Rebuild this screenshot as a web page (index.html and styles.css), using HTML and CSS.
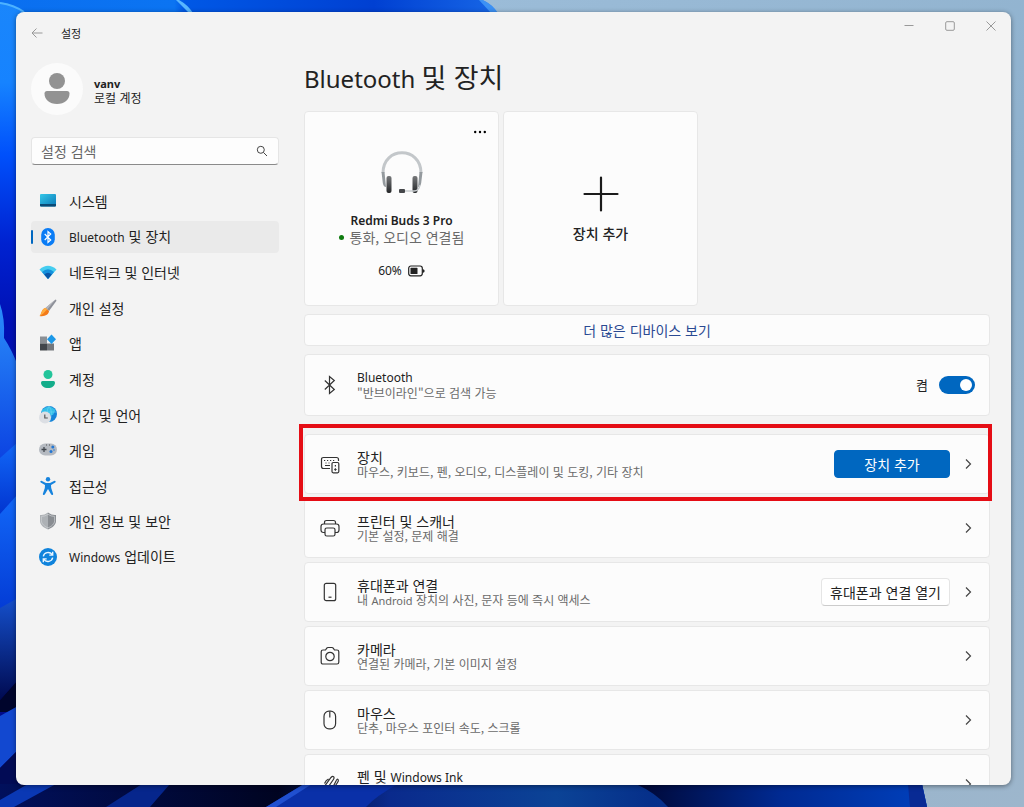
FILE: index.html
```html
<!DOCTYPE html>
<html lang="ko">
<head>
<meta charset="utf-8">
<meta name="viewport" content="width=device-width, initial-scale=1">
<title>설정</title>
<link rel="stylesheet" href="styles.css">
</head>
<body>
<svg class="wallpaper" viewBox="0 0 1024 807" preserveAspectRatio="none" aria-hidden="true">
  <defs>
    <linearGradient id="sky" x1="0" y1="0" x2="1" y2="1"><stop offset="0" stop-color="#a3c3df"/><stop offset=".6" stop-color="#8fb1cd"/><stop offset="1" stop-color="#9db6cc"/></linearGradient>
    <linearGradient id="side" x1="0" y1="0" x2="0" y2="1"><stop offset="0" stop-color="#1a86fb"/><stop offset=".1" stop-color="#1683ff"/><stop offset=".19" stop-color="#0050fb"/><stop offset=".3" stop-color="#0022d0"/><stop offset=".4" stop-color="#0010b4"/><stop offset="1" stop-color="#000a80"/></linearGradient>
    <linearGradient id="topband" x1="0" y1="0" x2="1" y2="0"><stop offset="0" stop-color="#0a6ff0"/><stop offset=".35" stop-color="#0b74f2"/><stop offset=".37" stop-color="#0058e6"/><stop offset=".75" stop-color="#0040d2"/><stop offset="1" stop-color="#1766e6"/></linearGradient>
    <linearGradient id="petal" x1="0" y1="0" x2="0" y2="1"><stop offset="0" stop-color="#2a8dfb"/><stop offset="1" stop-color="#0a3ee0"/></linearGradient>
    <linearGradient id="petal2" x1="0" y1="0" x2="0" y2="1"><stop offset="0" stop-color="#1268f8"/><stop offset="1" stop-color="#0030cc"/></linearGradient>
    <linearGradient id="petal3" x1="0" y1="0" x2="0" y2="1"><stop offset="0" stop-color="#1550cc"/><stop offset="1" stop-color="#000a50"/></linearGradient>
    <linearGradient id="base" x1="0" y1="0" x2="1" y2="0"><stop offset="0" stop-color="#01105c"/><stop offset=".3" stop-color="#000421"/><stop offset=".42" stop-color="#0a2a8c"/><stop offset=".6" stop-color="#0b4396"/><stop offset=".7" stop-color="#06308a"/><stop offset="1" stop-color="#0038b8"/></linearGradient>
    <linearGradient id="navy" x1="0" y1="0" x2="1" y2="0"><stop offset="0" stop-color="#000836"/><stop offset=".5" stop-color="#002a92"/><stop offset="1" stop-color="#0040bc"/></linearGradient>
  </defs>
  <rect width="1024" height="807" fill="url(#sky)"/>
  <path d="M0 0H482Q492 4 498 14V60H0Z" fill="url(#topband)"/>
  <path d="M176 0H179Q188 5 193 13H189Z" fill="#58b6ff"/>
  <path d="M479 0H483Q493 5 498 13H491Z" fill="#3c91f5"/>
  <path d="M0 2Q14 4 26 14V807H0Z" fill="url(#side)"/>
  <path d="M0 3Q14 5 24 12" fill="none" stroke="#4db2ff" stroke-width="2"/>
  <path d="M0 304Q5 318 4 338Q12 350 18 366V470H0Z" fill="url(#petal)"/>
  <path d="M0 458L18 442V520H0Z" fill="url(#petal2)"/>
  <path d="M0 514L18 494V620L0 640Z" fill="url(#petal2)"/>
  <path d="M0 608L18 598V680L0 700Z" fill="url(#petal3)"/>
  <path d="M0 700L18 680V712H0Z" fill="#00052c"/>
  <path d="M0 716L18 706V750L0 768Z" fill="#1248d0"/>
  <path d="M0 768L18 750V800H0Z" fill="#020b55"/>
  <path d="M0 784H922L927 807H0Z" fill="url(#base)"/>
  <path d="M0 800L28 784H56L14 807H0Z" fill="#0a38b4"/>
  <path d="M106 807L142 784H170L150 807Z" fill="#06268c"/>
  <path d="M266 807L304 784H398Q376 796 366 807Z" fill="#0a30a8"/>
  <path d="M266 807L304 784H312L276 807Z" fill="#2050d0"/>
  <path d="M636 784H922L927 807H668Q656 793 636 784Z" fill="url(#navy)"/>
  <path d="M908 784H922L927 807H910Z" fill="#082a94"/>
</svg>

<div class="window">
  <header class="titlebar">
    <button class="back" type="button" aria-label="뒤로"><svg width="12" height="12" viewBox="0 0 12 12"><path d="M11.500 6H1M5.500 1.500L1 6l4.500 4.500"/></svg></button>
    <span class="title">설정</span>
    <div class="controls">
      <button type="button" aria-label="최소화"><svg width="10" height="10" viewBox="0 0 10 10"><path d="M.5 4.500h9"/></svg></button>
      <button type="button" aria-label="최대화"><svg width="10" height="10" viewBox="0 0 10 10"><rect x=".7" y=".7" width="8.600" height="8.600" rx="1.200"/></svg></button>
      <button type="button" aria-label="닫기"><svg width="10" height="10" viewBox="0 0 10 10"><path d="M.5.5l9 9M9.500.5l-9 9"/></svg></button>
    </div>
  </header>

  <div class="body">
    <aside class="sidebar">
      <div class="profile">
        <svg class="avatar" viewBox="0 0 52 52" aria-hidden="true"><circle cx="26" cy="26" r="26" fill="#fbfbfb"/><circle cx="26" cy="18" r="8" fill="#929292"/><path d="M16 28h20q2.500 0 2.500 2.500c0 6-5 10.500-12.500 10.500s-12.500-4.500-12.500-10.500q0-2.500 2.500-2.500z" fill="#929292"/></svg>
        <div class="who"><strong>vanv</strong><span>로컬 계정</span></div>
      </div>
      <div class="search">
        <input type="search" placeholder="설정 검색" aria-label="설정 검색">
        <svg width="12" height="12" viewBox="0 0 12 12" aria-hidden="true"><circle cx="4.800" cy="4.800" r="3.500"/><path d="M7.500 7.500l3.500 3.500"/></svg>
      </div>
      <nav>
        <ul>
          <li><a href="#system"><svg viewBox="0 0 18 18"><defs><linearGradient id="g1" x1="0" y1="0" x2="1" y2="1"><stop offset="0" stop-color="#35c8e8"/><stop offset="1" stop-color="#0a78b8"/></linearGradient></defs><rect x="1" y="2" width="16" height="12.500" rx="1" fill="url(#g1)"/><path d="M1 12h16v1.500q0 1-1 1H2q-1 0-1-1z" fill="#0b4a75"/></svg>시스템</a></li>
          <li><a href="#bluetooth" class="current" aria-current="page"><svg viewBox="0 0 18 18"><rect x="2.200" y="0" width="13.600" height="18" rx="6.800" fill="#0a7cf5"/><path d="M5.700 6l6 6L9 14.500V3.500L11.700 6l-6 6" fill="none" stroke="#fff" stroke-width="1.200"/></svg><span><span class="latin">Bluetooth</span> 및 장치</span></a></li>
          <li><a href="#network"><svg viewBox="0 0 18 18"><path d="M.5 6.500Q9-1 17.500 6.500L9 16z" fill="#45cdf0"/><path d="M3 9Q9 3.500 15 9L9 16z" fill="#1590dc"/><path d="M5.200 11.500Q9 8 12.800 11.500L9 16z" fill="#0a57a8"/></svg>네트워크 및 인터넷</a></li>
          <li><a href="#personal"><svg viewBox="0 0 18 18"><path d="M16.500.5q1.200.3.800 1.500L10 12 6.500 9z" fill="#8d9099"/><path d="M16.500.5L6.500 9l1.700 1.500z" fill="#b4b6bc"/><path d="M6.500 9l3.500 3c0 3.500-4.500 6-9.500 5C2.500 16 2 10 6.500 9z" fill="#f37a18"/><path d="M6.500 9l1.700 1.500C6 12 5 15 .5 17 2.500 16 2 10 6.500 9z" fill="#ffac3d"/></svg>개인 설정</a></li>
          <li><a href="#apps"><svg viewBox="0 0 18 18"><path d="M1 2.500h7v7H1z" fill="#8b8f94"/><path d="M1 9.500h7v7H1z" fill="#42464b"/><path d="M8 9.500h7v7H8z" fill="#74787d"/><path d="M12.500.5L17 5.200l-4.500 4.700L8 5.200z" fill="#1b98e8"/></svg>앱</a></li>
          <li><a href="#accounts"><svg viewBox="0 0 18 18"><circle cx="9" cy="4.500" r="4.500" fill="#22c49a"/><path d="M3.500 11h11q1.500 0 1.500 1.500c0 3.500-3 5.500-7 5.500s-7-2-7-5.500Q2 11 3.500 11z" fill="#13ad8a"/></svg>계정</a></li>
          <li><a href="#time"><svg viewBox="0 0 18 18"><circle cx="10" cy="8" r="8" fill="#1684d8"/><path d="M3 4Q10-3 16.500 4L14 9H3z" fill="#35bfe8"/><path d="M10 0q-4 7 0 16M2.500 6h15M10 0q5 7 0 16" fill="none" stroke="#78d8f5" stroke-width=".5"/><circle cx="6" cy="11.500" r="6" fill="#dcdfe4"/><path d="M5.800 8.500v3.500h3" fill="none" stroke="#555" stroke-width="1.200"/></svg>시간 및 언어</a></li>
          <li><a href="#gaming"><svg viewBox="0 0 18 18"><rect x="0" y="2.500" width="18" height="12" rx="6" fill="#b5bac1"/><path d="M2.500 8.500h5M5 6v5" stroke="#42474e" stroke-width="1.300"/><circle cx="13.800" cy="6" r="1.500" fill="#2377d4"/><circle cx="12" cy="10.500" r="1.500" fill="#2377d4"/><circle cx="15" cy="9" r="1" fill="#6097d4"/><path d="M7 4h1M10 4h1" stroke="#555"/></svg>게임</a></li>
          <li><a href="#access"><svg viewBox="0 0 18 18"><circle cx="9" cy="2.200" r="2.200" fill="#1683dd"/><path d="M2.500 3.800L7 6h4l4.500-2.200q1.800.2.800 1.700L12 8l.2 3 2 6q-.5 1.800-2 .5L9 12l-3.200 5.500q-1.500 1.300-2-.5l2-6L6 8 1.700 5.500q-1-1.500.8-1.700z" fill="#1683dd"/></svg>접근성</a></li>
          <li><a href="#privacy"><svg viewBox="0 0 18 18"><path d="M9 .5q4 3 8 2.500v6c0 4-4 7-8 8.500z" fill="#898d92"/><path d="M9 .5Q5 3.500 1 3v6c0 4 4 7 8 8.500z" fill="#adb1b5"/><path d="M9 2.300q3.200 2.200 6.600 2.100v4.400c0 3.200-3.300 5.700-6.600 7.100-3.300-1.400-6.600-3.900-6.600-7.100V4.400Q5.800 4.500 9 2.300z" fill="none" stroke="#d0d2d5" stroke-width=".7"/></svg>개인 정보 및 보안</a></li>
          <li><a href="#update"><svg viewBox="0 0 18 18"><circle cx="9" cy="9" r="9" fill="#0f83dc"/><path d="M4.300 8.300C5 4.500 10.500 3 13.300 6.600M13.700 3.700v3.400h-3.400M13.700 9.700C13 13.500 7.500 15 4.700 11.400M4.300 14.300v-3.400h3.400" fill="none" stroke="#e8f5ff" stroke-width="1.400"/></svg><span><span class="latin">Windows</span> 업데이트</span></a></li>
        </ul>
      </nav>
    </aside>

    <main>
      <h1><span class="latin">Bluetooth</span> 및 장치</h1>

      <div class="cards">
        <section class="card device">
          <button class="more" type="button" aria-label="추가 옵션"><svg width="12" height="4" viewBox="0 0 12 4"><circle cx="1.200" cy="2" r="1.200"/><circle cx="6" cy="2" r="1.200"/><circle cx="10.800" cy="2" r="1.200"/></svg></button>
          <svg class="headset" viewBox="0 0 44 44" aria-hidden="true">
            <defs>
              <linearGradient id="cup" x1="0" y1="0" x2="0" y2="1"><stop offset="0" stop-color="#77797b"/><stop offset="1" stop-color="#242628"/></linearGradient>
            </defs>
            <path d="M3 23C3-4 41-4 41 23" fill="none" stroke="#c3c7ca" stroke-width="3"/>
            <path d="M1.500 22h3L6 37q-2.500 0-3.200-4zM42.500 22h-3L38 37q2.500 0 3.200-4z" fill="#949a9e"/>
            <rect x="6.500" y="26" width="5" height="17" rx="2" fill="url(#cup)"/><rect x="32.500" y="26" width="5" height="17" rx="2" fill="url(#cup)"/>
            <path d="M40 35q-1 6-6 6H22" fill="none" stroke="#c9cdd0" stroke-width="1.500"/>
            <rect x="19" y="39" width="6" height="4" rx="1" fill="#45474a"/>
          </svg>
          <h2 class="name">Redmi Buds 3 Pro</h2>
          <p class="status">통화, 오디오 연결됨</p>
          <p class="battery">60% <svg width="17" height="12" viewBox="0 0 17 12" aria-hidden="true"><rect x=".7" y="1" width="13.600" height="9.800" rx="2.200" fill="none" stroke="#222" stroke-width="1.200"/><rect x="2.500" y="2.800" width="7" height="6.200" rx=".6" fill="#222"/><path d="M14.500 4q2.200.5 2.200 2t-2.200 2z" fill="#222"/></svg></p>
        </section>
        <button class="card add" type="button">
          <svg width="36" height="36" viewBox="0 0 36 36" aria-hidden="true"><path d="M18 1.500v33M1.500 18h33" stroke="#1b1b1b" stroke-width="2.200" stroke-linecap="round"/></svg>
          <span>장치 추가</span>
        </button>
      </div>

      <a class="all-devices" href="#devices">더 많은 디바이스 보기</a>

      <div class="row toggle-row">
        <svg class="icon" viewBox="0 0 20 20"><path d="M4.800 5.500l9.500 9L9.500 18.500v-17l4.800 4-9.500 9"/></svg>
        <div class="text"><label class="label latin-label" for="bt">Bluetooth</label><span class="hint">"반브이라인"으로 검색 가능</span></div>
        <span class="state">켬</span>
        <input class="switch" id="bt" type="checkbox" role="switch" checked>
      </div>

      <ul class="rows">
        <li class="row marked">
          <svg class="icon" viewBox="0 0 20 20"><path d="M10 14.500H3.500q-2 0-2-2v-7q0-2 2-2h13q2 0 2 2v1.500M5 11.500h5"/><path d="M4 6.500h1.200M7 6.500h1.200M10 6.500h1.200M13 6.500h1.200M5.500 9h1M8.500 9h1"/><rect x="12" y="8.500" width="6.800" height="10.300" rx="1.200"/><path d="M15.400 11v1.500M14.200 15.500h2.400M15.400 14.300v2.400"/></svg>
          <div class="text"><span class="label">장치</span><span class="hint">마우스, 키보드, 펜, 오디오, 디스플레이 및 도킹, 기타 장치</span></div>
          <button class="btn primary" type="button">장치 추가</button>
          <button class="go" type="button" aria-label="장치"><svg viewBox="0 0 8 12"><path d="M2 1.500L6.500 6 2 10.500"/></svg></button>
        </li>
        <li class="row">
          <svg class="icon" viewBox="0 0 20 20"><path d="M5 14.500H3.500q-2.500 0-2.500-2.500V8.500Q1 6 3.500 6h13q2.500 0 2.500 2.500V12q0 2.500-2.500 2.500H15M4.500 6V4.500q0-2 2-2h7q2 0 2 2V6"/><rect x="5" y="10" width="10" height="8" rx="1.800"/></svg>
          <div class="text"><span class="label">프린터 및 스캐너</span><span class="hint">기본 설정, 문제 해결</span></div>
          <button class="go" type="button" aria-label="프린터 및 스캐너"><svg viewBox="0 0 8 12"><path d="M2 1.500L6.500 6 2 10.500"/></svg></button>
        </li>
        <li class="row">
          <svg class="icon" viewBox="0 0 20 20"><rect x="4.300" y="1.300" width="11.400" height="17.400" rx="2"/><path d="M8.500 15.200h3"/></svg>
          <div class="text"><span class="label">휴대폰과 연결</span><span class="hint">내 <span class="latin">Android</span> 장치의 사진, 문자 등에 즉시 액세스</span></div>
          <button class="btn" type="button">휴대폰과 연결 열기</button>
          <button class="go" type="button" aria-label="휴대폰과 연결"><svg viewBox="0 0 8 12"><path d="M2 1.500L6.500 6 2 10.500"/></svg></button>
        </li>
        <li class="row">
          <svg class="icon" viewBox="0 0 20 20"><path d="M3 4h2.500l1.300-1.900q.4-.6 1.200-.6h4q.8 0 1.200.6L14.500 4H17q1.800 0 1.800 1.800v10.400q0 1.800-1.800 1.800H3q-1.800 0-1.800-1.800V5.800Q1.200 4 3 4z"/><circle cx="10" cy="10.500" r="4.200"/></svg>
          <div class="text"><span class="label">카메라</span><span class="hint">연결된 카메라, 기본 이미지 설정</span></div>
          <button class="go" type="button" aria-label="카메라"><svg viewBox="0 0 8 12"><path d="M2 1.500L6.500 6 2 10.500"/></svg></button>
        </li>
        <li class="row">
          <svg class="icon" viewBox="0 0 20 20"><rect x="4" y="1.200" width="11.600" height="17.600" rx="5"/><path d="M9.800 1.500v6"/></svg>
          <div class="text"><span class="label">마우스</span><span class="hint">단추, 마우스 포인터 속도, 스크롤</span></div>
          <button class="go" type="button" aria-label="마우스"><svg viewBox="0 0 8 12"><path d="M2 1.500L6.500 6 2 10.500"/></svg></button>
        </li>
        <li class="row">
          <svg class="icon" viewBox="0 0 20 20"><path d="M4 13L11 3.500q1.500-1.700 2.600-.8 1 1-.2 2.800L7.500 14 4 19M12 15l4-8q1-2.500 2-1.500.8 1-.5 3L13 15.500q-1.500 3 .5 3.500M8.500 5Q6 6 4.500 9.500"/></svg>
          <div class="text single"><span class="label">펜 및 <span class="latin">Windows Ink</span></span></div>
          <button class="go" type="button" aria-label="펜 및 Windows Ink"><svg viewBox="0 0 8 12"><path d="M2 1.500L6.500 6 2 10.500"/></svg></button>
        </li>
      </ul>
    </main>
  </div>
</div>
</body>
</html>
```
FILE: styles.css
```css
* { box-sizing: border-box; }

body {
  margin: 0;
  height: 100vh;
  padding: 12px 13px 22px 16px;
  overflow: hidden;
  background: #94b4cf;
  color: #222;
  font: 14px/16px "Noto Sans CJK KR", sans-serif;
}

button, input { font: inherit; color: inherit; }
button { padding: 0; border: 0; background: none; }
ul { margin: 0; padding: 0; list-style: none; }
a { color: inherit; text-decoration: none; }

.latin, .latin-label { font-family: "Noto Sans", sans-serif; font-size: 12px; }

.wallpaper {
  position: absolute;
  inset: 0;
  width: 100%;
  height: 100%;
  z-index: -1;
}

.window {
  display: flex;
  flex-direction: column;
  height: 100%;
  overflow: hidden;
  border-radius: 8px;
  background: #f3f3f3;
  box-shadow: 0 1px 5px rgba(0, 0, 0, .45);
}

/* Title bar */
.titlebar {
  display: flex;
  align-items: center;
  flex: none;
  height: 42px;
  padding-left: 15px;
}
.titlebar svg { display: block; fill: none; stroke: #999; stroke-width: 1; }
.back { margin-right: 18px; }
.title { font-size: 11px; }
.controls { display: flex; align-self: flex-start; margin-left: auto; }
.controls button {
  display: grid;
  place-items: center;
  width: 41px;
  height: 28px;
}

.body { display: flex; flex: 1; min-height: 0; }

/* Sidebar */
.sidebar { flex: none; width: 263px; padding: 9px 0 0 15px; }
.profile { display: flex; align-items: center; gap: 11px; }
.avatar { width: 52px; height: 52px; }
.who { display: grid; margin-top: 4px; font-size: 12px; line-height: 14px; }
.who strong { font-family: "Noto Sans", sans-serif; font-size: 11px; }

.search {
  display: flex;
  align-items: center;
  height: 28px;
  margin: 22px 0 20px;
  padding: 0 10px 0 9px;
  border: 1px solid #e5e5e5;
  border-bottom-color: #8a8a8a;
  border-radius: 4px;
  background: #fdfdfd;
}
.search input {
  flex: 1;
  min-width: 0;
  padding: 0;
  border: 0;
  outline: 0;
  background: none;
}
.search input::placeholder { color: #666; opacity: 1; }
.search svg { fill: none; stroke: #444; stroke-width: 1; }

nav ul {
  display: flex;
  flex-direction: column;
  justify-content: space-between;
  height: 388px;
}
nav a {
  position: relative;
  display: flex;
  align-items: center;
  gap: 12px;
  height: 32px;
  padding-left: 8px;
  border-radius: 4px;
}
nav svg { width: 18px; height: 18px; }
nav .current { background: #eaeaea; }
nav .current::before {
  content: "";
  position: absolute;
  left: 0;
  width: 2px;
  height: 14px;
  border-radius: 1px;
  background: #0067c0;
}

/* Content */
main { flex: 1; min-width: 0; padding: 4px 21px 0 25px; overflow: hidden; }
h1 {
  display: flex;
  align-items: baseline;
  gap: 6px;
  height: 38px;
  margin: 0 0 15px;
  font-size: 27px;
  font-weight: 400;
  line-height: 38px;
}
h1 .latin { font-size: 24px; }

.card, .all-devices, .row {
  border: 1px solid #e7e7e7;
  border-radius: 4px;
  background: #fcfcfc;
}

.cards { display: flex; gap: 4px; }
.card {
  position: relative;
  display: flex;
  flex-direction: column;
  align-items: center;
  width: 195px;
  height: 195px;
}
.device { padding-top: 38px; }
.more { position: absolute; top: 12px; right: 12px; height: 16px; }
.more svg { display: block; }
.headset { width: 44px; height: 44px; }
.name, .status, .battery { margin: 0; line-height: 17px; }
.name {
  margin-top: 18px;
  font-family: "Noto Sans", sans-serif;
  font-size: 12px;
  font-weight: 600;
}
.status { display: flex; align-items: center; gap: 6px; color: #6a6a6a; }
.status::before {
  content: "";
  width: 5px;
  height: 5px;
  border-radius: 50%;
  background: #0f7b0f;
}
.battery {
  display: flex;
  align-items: center;
  gap: 6px;
  margin-top: 16px;
  font-family: "Noto Sans", sans-serif;
  font-size: 12px;
}
.add { justify-content: center; gap: 13px; font-weight: 500; }

.all-devices {
  display: block;
  margin: 8px 0;
  line-height: 30px;
  text-align: center;
  color: #2b4a93;
}

.row {
  position: relative;
  display: flex;
  align-items: center;
  height: 60px;
  padding: 0 14px 0 15px;
}
.toggle-row { height: 62px; margin-bottom: 18px; }
.icon {
  flex: none;
  width: 20px;
  height: 20px;
  margin-right: 17px;
  fill: none;
  stroke: #333;
  stroke-width: 1.2;
}
.text { display: grid; margin-right: auto; }
.single { margin-bottom: 14px; }
.label { line-height: 16px; }
.hint { font-size: 12px; line-height: 14px; color: #6a6a6a; }
.hint .latin { font-size: 11px; }
.state { margin-right: 11px; font-size: 13px; }

.switch {
  appearance: none;
  width: 36px;
  height: 18px;
  margin: 0;
  padding: 3px;
  border-radius: 9px;
  background: #0067c0;
}
.switch::before {
  content: "";
  display: block;
  width: 12px;
  height: 12px;
  margin-left: auto;
  border-radius: 50%;
  background: #fff;
}

.rows { display: grid; gap: 4px; }
.btn {
  height: 28px;
  padding: 0 8px;
  border: 1px solid #e5e5e5;
  border-bottom-color: #ccc;
  border-radius: 4px;
  background: #fff;
}
.primary { width: 116px; border-color: #0067c0; background: #0067c0; color: #fff; }
.go { display: grid; place-items: center; width: 14px; height: 28px; margin-left: 11px; }
.go svg { width: 8px; height: 12px; fill: none; stroke: #444; stroke-width: 1.2; }

/* Highlight frame around a row */
.marked::after {
  content: "";
  position: absolute;
  z-index: 1;
  inset: -11px -3px -8px -6px;
  border: 4px solid #e50d15;
  pointer-events: none;
}
```
